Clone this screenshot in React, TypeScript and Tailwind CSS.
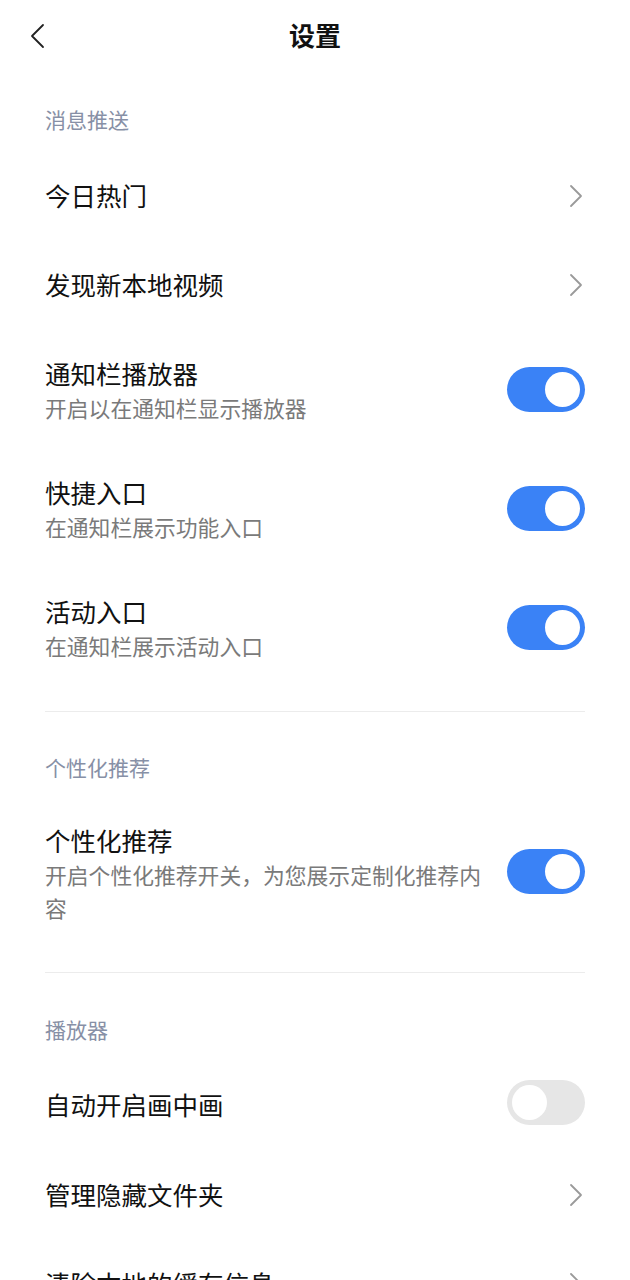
import { useState } from 'react';

const font = { fontFamily: '"Noto Sans CJK SC", "Noto Sans", sans-serif' };

function Chevron() {
  return (
    <svg width="14" height="24" viewBox="0 0 14 24" fill="none" className="shrink-0">
      <path d="M2 2l10 10-10 10" stroke="#9a9a9a" strokeWidth="1.8" strokeLinecap="round" strokeLinejoin="round" />
    </svg>
  );
}

function Toggle({ on, onClick }: { on: boolean; onClick: () => void }) {
  return (
    <button
      onClick={onClick}
      className={`relative shrink-0 w-[78px] h-[45px] rounded-full transition-colors ${on ? 'bg-[#3a82f6]' : 'bg-[#e6e6e6]'}`}
    >
      <span
        className={`absolute top-[5px] w-[35px] h-[35px] rounded-full bg-white transition-all ${on ? 'left-[38px]' : 'left-[5px]'}`}
      />
    </button>
  );
}

function Label({ text, top }: { text: string; top: string }) {
  return (
    <div className={`${top} pb-[18px] text-[21px] leading-[30px] text-[#8790a6]`}>{text}</div>
  );
}

function LinkRow({ title }: { title: string }) {
  return (
    <div className="h-[89px] pb-[4px] flex items-center justify-between">
      <span className="text-[25.5px] leading-[36px] text-[#111]">{title}</span>
      <div className="pr-[2px] pt-[2px]">
        <Chevron />
      </div>
    </div>
  );
}

function SwitchRow({
  title,
  desc,
  on,
  onToggle,
  height = 'h-[119px]',
  shift = '',
}: {
  title: string;
  desc?: string;
  on: boolean;
  onToggle: () => void;
  height?: string;
  shift?: string;
}) {
  return (
    <div className={`${height} flex items-center justify-between gap-4`}>
      <div className={`flex-1 max-w-[445px] ${shift}`}>
        <div className="text-[25.5px] leading-[36px] text-[#111]">{title}</div>
        {desc && <div className="text-[21.8px] leading-[33px] text-[#7a7a7a]">{desc}</div>}
      </div>
      <Toggle on={on} onClick={onToggle} />
    </div>
  );
}

export default function App() {
  const [s, setS] = useState({
    player: true,
    shortcut: true,
    activity: true,
    personal: true,
    pip: false,
  });
  const flip = (k: keyof typeof s) => setS((p) => ({ ...p, [k]: !p[k] }));

  return (
    <div style={font} className="w-[630px] h-[1280px] overflow-hidden bg-white">
      <div className="relative h-[74px] pb-[4px] flex items-center justify-center">
        <button className="absolute left-[30px] top-[23px]">
          <svg width="16" height="26" viewBox="0 0 16 26" fill="none">
            <path d="M13 2L2 13l11 11" stroke="#222" strokeWidth="1.8" strokeLinecap="round" strokeLinejoin="round" />
          </svg>
        </button>
        <h1 className="text-[26px] font-bold text-[#111] leading-[36px]">设置</h1>
      </div>

      <div className="px-[45px]">
        <Label text="消息推送" top="pt-[30px]" />
        <LinkRow title="今日热门" />
        <LinkRow title="发现新本地视频" />
        <SwitchRow title="通知栏播放器" desc="开启以在通知栏显示播放器" on={s.player} onToggle={() => flip('player')} />
        <SwitchRow title="快捷入口" desc="在通知栏展示功能入口" on={s.shortcut} onToggle={() => flip('shortcut')} />
        <SwitchRow title="活动入口" desc="在通知栏展示活动入口" on={s.activity} onToggle={() => flip('activity')} />

        <div className="mt-[24px] h-px bg-[#ececec]" />

        <Label text="个性化推荐" top="pt-[40px]" />
        <SwitchRow
          title="个性化推荐"
          desc="开启个性化推荐开关，为您展示定制化推荐内容"
          on={s.personal}
          onToggle={() => flip('personal')}
          height="h-[143px]"
          shift="pt-[3px]"
        />

        <div className="mt-[29px] h-px bg-[#ececec]" />

        <Label text="播放器" top="pt-[41px]" />
        <SwitchRow title="自动开启画中画" on={s.pip} onToggle={() => flip('pip')} height="h-[80px]" shift="pt-[4px]" />
        <div className="h-[9px]" />
        <LinkRow title="管理隐藏文件夹" />
        <LinkRow title="清除本地的缓存信息" />
      </div>
    </div>
  );
}
